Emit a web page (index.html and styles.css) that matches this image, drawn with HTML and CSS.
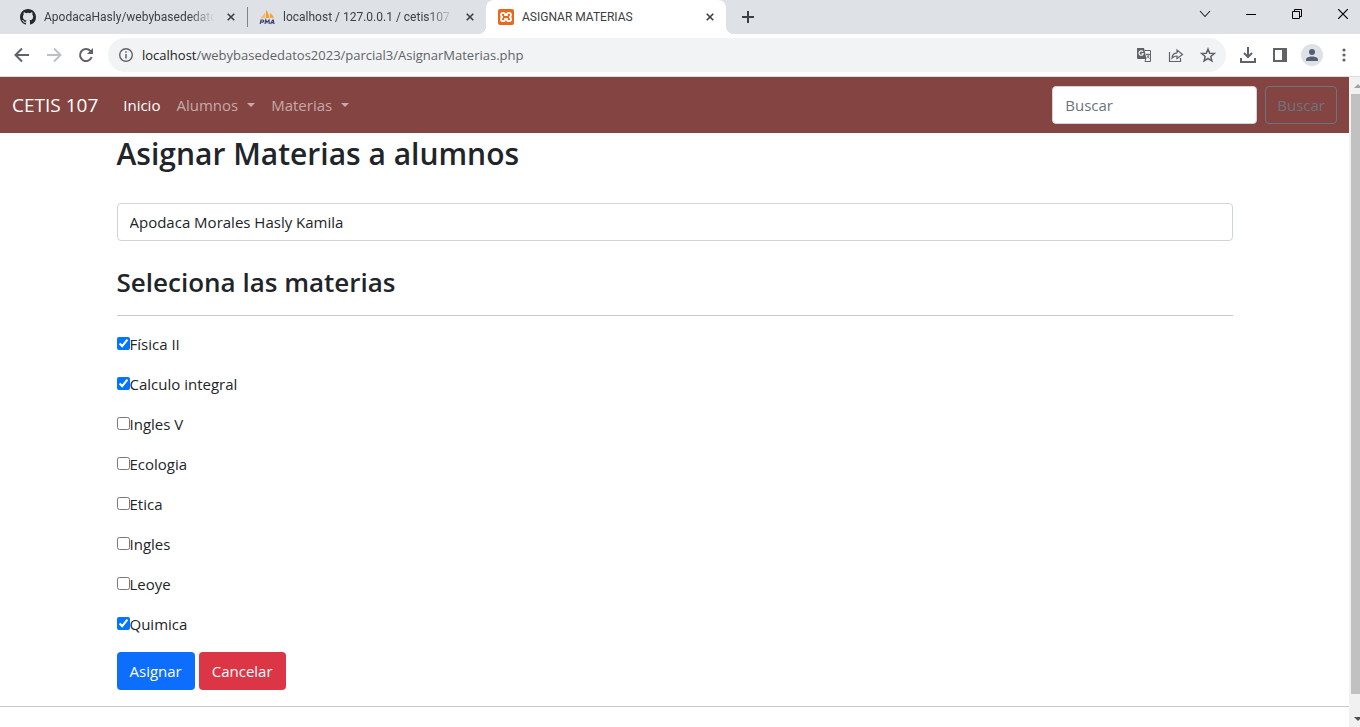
FILE: index.html
```html
<!DOCTYPE html>
<html lang="es">
<head>
<meta charset="utf-8">
<meta name="viewport" content="width=device-width, initial-scale=1">
<title>ASIGNAR MATERIAS</title>
<link rel="stylesheet" href="styles.css">
</head>
<body>
<header class="browser">
  <div class="tabs">
    <div class="tab tab-divided">
      <svg class="favicon" viewBox="0 0 16 16" aria-hidden="true"><path fill="#24292f" d="M8 0C3.58 0 0 3.58 0 8c0 3.54 2.29 6.53 5.47 7.59.4.07.55-.17.55-.38 0-.19-.01-.82-.01-1.49-2.01.37-2.53-.49-2.69-.94-.09-.23-.48-.94-.82-1.13-.28-.15-.68-.52-.01-.53.63-.01 1.08.58 1.23.82.72 1.21 1.87.87 2.33.66.07-.52.28-.87.51-1.07-1.78-.2-3.64-.89-3.64-3.95 0-.87.31-1.59.82-2.15-.08-.2-.36-1.02.08-2.12 0 0 .67-.21 2.2.82a7.6 7.6 0 0 1 4 0c1.53-1.04 2.2-.82 2.2-.82.44 1.1.16 1.92.08 2.12.51.56.82 1.27.82 2.15 0 3.07-1.87 3.75-3.65 3.95.29.25.54.73.54 1.48 0 1.07-.01 1.93-.01 2.2 0 .21.15.46.55.38A8.01 8.01 0 0 0 16 8c0-4.42-3.58-8-8-8z"/></svg>
      <span class="tab-title tab-title-fade">ApodacaHasly/webybasededato</span>
      <button class="tab-close" type="button" aria-label="Cerrar"><svg viewBox="0 0 8 8" width="8" height="8"><path d="M.7.7l6.6 6.6M7.3.7L.7 7.3" stroke="#3c4043" stroke-width="1.6"/></svg></button>
    </div>
    <div class="tab">
      <svg class="favicon" viewBox="0 0 16 16" aria-hidden="true"><path fill="#f89c1c" d="M7 9V1c2 2 3 5 3 8z"/><path fill="#fbb860" d="M6 3v6H1c2-1 4-3 5-6z"/><path fill="#f9a13a" d="M11 4c2 1 3 3 4 5h-4z"/><path d="M1.200 15l.8-4h1.800c1.500 0 1 2.200-.5 2.200H2M6 15l.8-4 1.200 2.500L10 11l.2 4M11.500 15l2.200-4h.6l.7 4M12.500 13.700h2" fill="none" stroke="#3f4172" stroke-width="1.200"/></svg>
      <span class="tab-title tab-title-fade">localhost / 127.0.0.1 / cetis107 /</span>
      <button class="tab-close" type="button" aria-label="Cerrar"><svg viewBox="0 0 8 8" width="8" height="8"><path d="M.7.7l6.6 6.6M7.3.7L.7 7.3" stroke="#3c4043" stroke-width="1.6"/></svg></button>
    </div>
    <div class="tab tab-active">
      <svg class="favicon" viewBox="0 0 16 16" aria-hidden="true"><rect width="16" height="16" rx="2" fill="#e8681c"/><path d="M5.200 3.800C3.600 3.800 3 4.800 3 5.800S3.600 8 5 8C3.600 8 3 9 3 10.200s.6 2 2.200 2c1.200 0 2-.8 2-2.200h1.600c0 1.400.8 2.200 2 2.200 1.600 0 2.200-.8 2.200-2S12.400 8 11 8c1.400 0 2-1.200 2-2.200s-.6-2-2.200-2c-1.200 0-2 .8-2 2.200H7.200c0-1.400-.8-2.200-2-2.200z" fill="none" stroke="#fff" stroke-width="1.800"/></svg>
      <span class="tab-title">ASIGNAR MATERIAS</span>
      <button class="tab-close" type="button" aria-label="Cerrar"><svg viewBox="0 0 8 8" width="8" height="8"><path d="M.7.7l6.6 6.6M7.3.7L.7 7.3" stroke="#3c4043" stroke-width="1.6"/></svg></button>
    </div>
    <button class="new-tab" type="button" aria-label="Nueva pestaña"><svg viewBox="0 0 12 12" width="12" height="12"><path d="M6 0v12M0 6h12" stroke="#3c4043" stroke-width="2"/></svg></button>
    <div class="window-controls">
      <button type="button" aria-label="Buscar pestañas"><svg viewBox="0 0 12 12" width="12" height="12"><path d="M1 3l5 5.500L11 3" fill="none" stroke="#222" stroke-width="1.100"/></svg></button>
      <button type="button" aria-label="Minimizar"><svg viewBox="0 0 10 10" width="10" height="10"><path d="M0 5.500h10" stroke="#000"/></svg></button>
      <button type="button" aria-label="Restaurar"><svg viewBox="0 0 10 10" width="10" height="10"><path d="M.5 2.500h7v7h-7zM2.500 2.500v-2h7v7h-2" fill="none" stroke="#000"/></svg></button>
      <button type="button" aria-label="Cerrar ventana"><svg viewBox="0 0 10 10" width="10" height="10"><path d="M0 0l10 10M10 0L0 10" stroke="#000" stroke-width="1.200"/></svg></button>
    </div>
  </div>
  <div class="toolbar">
    <button class="tool" type="button" aria-label="Atrás"><svg viewBox="0 0 16 16" width="16" height="16"><path d="M15 8H2M8 1.500L1.500 8 8 14.500" fill="none" stroke="#5f6368" stroke-width="2"/></svg></button>
    <button class="tool" type="button" aria-label="Adelante"><svg viewBox="0 0 16 16" width="16" height="16"><path d="M1 8h13M8 1.500L14.500 8 8 14.500" fill="none" stroke="#bdc1c6" stroke-width="2"/></svg></button>
    <button class="tool" type="button" aria-label="Recargar"><svg viewBox="0 0 16 16" width="16" height="16"><path d="M13.700 10A6 6 0 1 1 12.400 3.900L14 5.500" fill="none" stroke="#5f6368" stroke-width="2"/><path d="M15 1v6H9z" fill="#5f6368"/></svg></button>
    <div class="address">
      <svg class="info" viewBox="0 0 16 16" width="16" height="16" aria-hidden="true"><circle cx="8" cy="8" r="6.300" fill="none" stroke="#5f6368" stroke-width="1.400"/><path d="M8 7v4.500M8 4.300v1.500" stroke="#5f6368" stroke-width="1.500"/></svg>
      <span class="url"><span class="host">localhost</span>/webybasededatos2023/parcial3/AsignarMaterias.php</span>
      <button class="tool" type="button" aria-label="Traducir"><svg viewBox="0 0 16 16" width="16" height="16"><path d="M1 1h7l2.500 11H2a1 1 0 0 1-1-1z" fill="#5f6368"/><path d="M8.500 3.500h6v11H9l.7-2.500" fill="none" stroke="#5f6368"/><path d="M7 4.800a2.200 2.200 0 1 0 .3 2H5.400" fill="none" stroke="#fff" stroke-width="1.100"/><path d="M10 7.500h4M11.900 6.500v1M13 7.500c-.4 1.800-1.200 2.800-2.400 3.600M11 8.500l2.500 3" fill="none" stroke="#5f6368" stroke-width=".9"/></svg></button>
      <button class="tool" type="button" aria-label="Compartir"><svg viewBox="0 0 16 16" width="16" height="16"><path d="M1.500 5v9.500h11V11M4 11c.3-3.500 2-5 5-5.200V3l5.500 4.500L9 11.500V9c-2.200 0-3.700.6-5 2z" fill="none" stroke="#5f6368" stroke-width="1.200"/></svg></button>
      <button class="tool" type="button" aria-label="Marcador"><svg viewBox="0 0 16 16" width="16" height="16"><path d="M8 2l1.700 4.200 4.600.3-3.500 3 1.100 4.400L8 11.500l-3.900 2.400 1.100-4.400-3.500-3 4.600-.3z" fill="none" stroke="#5f6368" stroke-width="1.500"/></svg></button>
    </div>
    <button class="tool" type="button" aria-label="Descargas"><svg viewBox="0 0 16 16" width="16" height="16"><path d="M8 0v10M4 6l4 4 4-4M1 11v4h14v-4" fill="none" stroke="#5f6368" stroke-width="2"/></svg></button>
    <button class="tool" type="button" aria-label="Panel lateral"><svg viewBox="0 0 16 16" width="16" height="16"><path d="M2 2h12v12H2z" fill="none" stroke="#5f6368" stroke-width="2"/><path d="M10 2h4v12h-4z" fill="#5f6368"/></svg></button>
    <button class="tool avatar" type="button" aria-label="Perfil"><svg viewBox="0 0 16 16" width="16" height="16"><circle cx="8" cy="5" r="3" fill="#566074"/><path d="M2 14v-1.500C2 10.500 5 9.500 8 9.500s6 1 6 3V14z" fill="#566074"/></svg></button>
    <button class="tool" type="button" aria-label="Menú"><svg viewBox="0 0 16 16" width="16" height="16" fill="#5f6368"><circle cx="8" cy="3" r="1.600"/><circle cx="8" cy="8" r="1.600"/><circle cx="8" cy="13" r="1.600"/></svg></button>
  </div>
</header>
<div class="viewport">
  <div class="page">
    <nav class="navbar">
      <a class="brand" href="#">CETIS 107</a>
      <a class="nav-link active" href="#">Inicio</a>
      <a class="nav-link dropdown" href="#">Alumnos</a>
      <a class="nav-link dropdown" href="#">Materias</a>
      <form class="search" role="search">
        <input class="control" type="search" placeholder="Buscar" aria-label="Buscar">
        <button class="btn btn-outline" type="button">Buscar</button>
      </form>
    </nav>
    <main class="container">
      <h2>Asignar Materias a alumnos</h2>
      <form>
        <select class="control" aria-label="Alumno"><option>Apodaca Morales Hasly Kamila</option></select>
        <h3>Seleciona las materias</h3>
        <hr>
        <div class="subjects">
          <label><input type="checkbox" checked>Física II</label>
          <label><input type="checkbox" checked>Calculo integral</label>
          <label><input type="checkbox">Ingles V</label>
          <label><input type="checkbox">Ecologia</label>
          <label><input type="checkbox">Etica</label>
          <label><input type="checkbox">Ingles</label>
          <label><input type="checkbox">Leoye</label>
          <label><input type="checkbox" checked>Quimica</label>
        </div>
        <div class="actions">
          <button class="btn btn-primary" type="button">Asignar</button>
          <button class="btn btn-danger" type="button">Cancelar</button>
        </div>
      </form>
    </main>
    <hr>
  </div>
  <div class="scrollbar" aria-hidden="true">
    <svg viewBox="0 0 6 17" width="6" height="17"><path d="M0 11l4-4 4 4z" fill="#a3a3a3"/></svg>
    <div class="thumb"></div>
    <svg viewBox="0 0 6 17" width="6" height="17"><path d="M0 7h8l-4 4z" fill="#505050"/></svg>
  </div>
</div>
</body>
</html>
```
FILE: styles.css
```css
* { box-sizing: border-box; }

body {
  margin: 0;
  height: 100vh;
  display: flex;
  flex-direction: column;
  overflow: hidden;
  background: #fff;
  color: #212529;
  font-family: "Open Sans", "Noto Sans", sans-serif;
  font-size: 15px;
  line-height: 24px;
}

button, input, select { font: inherit; }
button { cursor: pointer; }
svg { display: block; flex: none; }

/* Browser frame */
.tabs {
  display: flex;
  height: 34px;
  padding-left: 8px;
  background: #dee1e6;
}
.tab {
  position: relative;
  display: flex;
  align-items: center;
  width: 239px;
  padding: 0 8px 0 12px;
  color: #3c4043;
  font-family: Roboto, "Open Sans", sans-serif;
  font-size: 12px;
}
.tab-divided::after {
  content: "";
  position: absolute;
  right: -1px;
  top: 7px;
  width: 1px;
  height: 20px;
  background: #808388;
}
.tab-active {
  width: 240px;
  background: #fff;
  border-radius: 8px 8px 0 0;
}
.tab-active::before, .tab-active::after {
  content: "";
  position: absolute;
  bottom: 0;
  width: 8px;
  height: 8px;
}
.tab-active::before {
  left: -8px;
  background: radial-gradient(circle at 0 0, #dee1e6 8px, #fff 8px);
}
.tab-active::after {
  right: -8px;
  background: radial-gradient(circle at 100% 0, #dee1e6 8px, #fff 8px);
}
.favicon { width: 16px; height: 16px; }
.tab-title {
  flex: 1;
  min-width: 0;
  margin: 0 8px;
  white-space: nowrap;
}
.tab-title-fade {
  -webkit-mask-image: linear-gradient(to right, #000 85%, transparent);
  mask-image: linear-gradient(to right, #000 85%, transparent);
}
.tab-close, .new-tab, .window-controls button, .tool {
  display: flex;
  align-items: center;
  justify-content: center;
  padding: 0;
  border: 0;
  background: none;
}
.tab-close { width: 16px; height: 16px; }
.new-tab { width: 28px; margin-left: 8px; }
.window-controls {
  display: flex;
  height: 28px;
  margin-left: auto;
  margin-right: -6px;
}
.window-controls button { width: 46px; }
.toolbar {
  display: flex;
  align-items: center;
  height: 43px;
  padding: 0 0 1px 6px;
  border-bottom: 1px solid #dadce0;
}
.tool { width: 32px; height: 32px; }
.address {
  flex: 1;
  display: flex;
  align-items: center;
  min-width: 0;
  height: 34px;
  margin: 0 6px 0 6px;
  padding: 0 2px 0 10px;
  border-radius: 17px;
  background: #f1f3f4;
  color: #5f6368;
  font-size: 13px;
}
.url { flex: 1; margin-left: 8px; overflow: hidden; white-space: nowrap; }
.host { color: #202124; }
.avatar {
  width: 22px;
  height: 22px;
  margin: 0 5px;
  border-radius: 50%;
  background: #dee1e6;
}

/* Page */
.viewport { flex: 1; display: flex; min-height: 0; }
.page { flex: 1; overflow: hidden; }
.navbar {
  display: flex;
  align-items: center;
  padding: 9px 12px;
  background: #844442;
}
.brand {
  margin-right: 17px;
  color: #fff;
  font-size: 19px;
  text-decoration: none;
}
.nav-link {
  padding: 0 8px;
  color: rgba(255, 255, 255, .55);
  text-decoration: none;
}
.nav-link.active { color: #fff; }
.dropdown::after {
  content: "";
  display: inline-block;
  margin-left: 9px;
  vertical-align: 4px;
  border: 4px solid transparent;
  border-top-color: currentColor;
  border-bottom: 0;
}
.search { display: flex; gap: 8px; margin-left: auto; }
.search .control { width: 205px; }
.control {
  display: block;
  width: 100%;
  height: 38px;
  padding: 6px 12px;
  border: 1px solid #ced4da;
  border-radius: 4px;
  background: #fff;
  color: #212529;
  appearance: none;
}
.control::placeholder { color: #6c757d; opacity: 1; }
.btn {
  padding: 6px 12px;
  border: 1px solid transparent;
  border-radius: 4px;
  color: #fff;
}
.btn-outline { padding: 6px 11px; border-color: #6c757d; background: none; color: #6c757d; }
.btn-primary { background: #0d6efd; }
.btn-danger { background: #dc3545; }

.container { max-width: 1140px; margin: 0 auto; padding: 0 12px; }
h2, h3 { margin: 0; font-weight: 600; }
h2 { margin-bottom: 28px; font-size: 30px; line-height: 42px; }
h3 { margin-top: 24px; font-size: 26px; line-height: 34px; }
hr {
  margin: 16px 0;
  border: 0;
  border-top: 1px solid #c8c9ca;
}
.subjects { display: grid; gap: 16px; justify-items: start; }
.subjects label { display: flex; align-items: flex-start; }
.subjects input { width: 13px; height: 13px; margin: 5px 0 0; }
.actions { display: flex; gap: 4px; margin-top: 16px; }

.scrollbar {
  display: flex;
  flex-direction: column;
  align-items: flex-end;
  width: 11px;
  background: #f1f1f1;
}
.thumb { width: 9px; height: calc(100% - 50px); margin-bottom: auto; background: #c1c1c1; }
```
